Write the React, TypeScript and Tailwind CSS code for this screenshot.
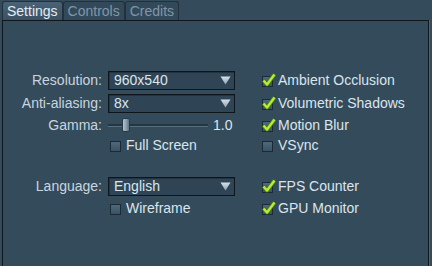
import React from "react";

const font = { fontFamily: '"Liberation Sans", Arial, sans-serif' };

function Tab({ label, active }: { label: string; active?: boolean }) {
  return (
    <div
      className={
        active
          ? "h-[19px] px-[4px] flex items-center rounded-t-[3px] border border-b-0 border-[#22313d] bg-gradient-to-b from-[#4a6276] to-[#3b5264] text-[#e4ecf2]"
          : "h-[19px] px-[4px] flex items-center rounded-t-[3px] border border-b-0 border-[#22313d] bg-[#33495a] text-[#7f97a8]"
      }
    >
      {label}
    </div>
  );
}

function Dropdown({ value }: { value: string }) {
  return (
    <div className="h-[19px] w-[127px] flex items-center justify-between pl-[5px] pr-[3px] border border-[#0e161c] bg-[#2f4556] shadow-[inset_1px_1px_0_#23333f] text-[#dbe5ec]">
      <span className="leading-none">{value}</span>
      <svg width="11" height="9" viewBox="0 0 11 9">
        <defs>
          <linearGradient id="tri" x1="0" y1="0" x2="0" y2="1">
            <stop offset="0" stopColor="#d6e0e8" />
            <stop offset="1" stopColor="#8ea2b2" />
          </linearGradient>
        </defs>
        <path d="M0.5 0.5 H10.5 L5.5 8.5 Z" fill="url(#tri)" />
      </svg>
    </div>
  );
}

function Check({ label, checked }: { label: string; checked?: boolean }) {
  return (
    <div className="flex items-center gap-[5px] text-[#dbe5ec]">
      <div className="relative w-[11px] h-[11px] mt-[2px] border border-[#1c2a35] bg-gradient-to-b from-[#4e687c] to-[#3a5266]">
        {checked && (
          <svg
            className="absolute left-[-1px] top-[-4px]"
            width="14"
            height="14"
            viewBox="0 0 14 14"
          >
            <path
              d="M1.5 7.5 L5 11.5 L12.5 1.5"
              fill="none"
              stroke="#4f7a12"
              strokeWidth="4"
              strokeLinejoin="round"
            />
            <path
              d="M1.5 7.5 L5 11.5 L12.5 1.5"
              fill="none"
              stroke="#b4ec3a"
              strokeWidth="2.4"
              strokeLinejoin="round"
            />
          </svg>
        )}
      </div>
      <span>{label}</span>
    </div>
  );
}

function Slider() {
  return (
    <div className="flex items-center gap-[5px] text-[#dbe5ec]">
      <div className="relative w-[100px] h-[14px] flex items-center">
        <div className="w-full h-[3px] bg-[#26363f] border-b border-[#55707f]" />
        <div className="absolute left-[14px] top-0 w-[8px] h-[14px] rounded-[2px] border border-[#2a3b47] bg-gradient-to-r from-[#b2c2ce] via-[#8ea2b0] to-[#5e7484]" />
      </div>
      <span>1.0</span>
    </div>
  );
}

export default function App() {
  const label = "flex items-center justify-end text-[#c9d5de]";
  const right = "flex items-center ml-[21px]";
  return (
    <div
      className="w-[432px] h-[266px] overflow-hidden bg-[#344b5c] text-[14px] pt-[1px]"
      style={font}
    >
      <div className="flex pl-[2px]">
        <Tab label="Settings" active />
        <Tab label="Controls" />
        <Tab label="Credits" />
      </div>
      <div className="ml-[2px] w-[427px] h-[260px] border-l border-t border-r border-[#0f171d] shadow-[1px_0_0_#4b6373] pt-[48px]">
        <div className="grid grid-cols-[99px_127px_auto] grid-rows-[22px_24px_20px_20px_20px_22px_22px] gap-x-[6px]">
          <div className={label}>Resolution:</div>
          <div className="flex items-center">
            <Dropdown value="960x540" />
          </div>
          <div className={right}>
            <Check label="Ambient Occlusion" checked />
          </div>

          <div className={label}>Anti-aliasing:</div>
          <div className="flex items-center">
            <Dropdown value="8x" />
          </div>
          <div className={right}>
            <Check label="Volumetric Shadows" checked />
          </div>

          <div className={label}>Gamma:</div>
          <div className="flex items-center">
            <Slider />
          </div>
          <div className={right}>
            <Check label="Motion Blur" checked />
          </div>

          <div />
          <div className="flex items-center pl-[2px]">
            <Check label="Full Screen" />
          </div>
          <div className={right}>
            <Check label="VSync" />
          </div>

          <div />
          <div />
          <div />

          <div className={label}>Language:</div>
          <div className="flex items-center">
            <Dropdown value="English" />
          </div>
          <div className={right}>
            <Check label="FPS Counter" checked />
          </div>

          <div />
          <div className="flex items-center pl-[2px]">
            <Check label="Wireframe" />
          </div>
          <div className={right}>
            <Check label="GPU Monitor" checked />
          </div>
        </div>
      </div>
    </div>
  );
}
